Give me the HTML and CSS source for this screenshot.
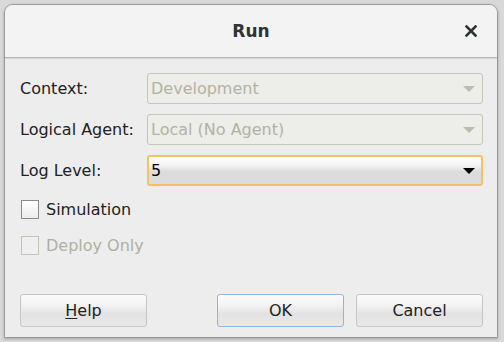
FILE: index.html
```html
<!DOCTYPE html>
<html lang="en">
<head>
    <meta charset="UTF-8">
    <title>Run</title>
    <link rel="stylesheet" href="styles.css">
</head>
<body>
    <div class="desktop">
        <div class="dialog">
            <header class="dialog-header">
                <h1 class="dialog-title">Run</h1>
                <button class="close-btn" aria-label="Close">
                    <svg width="12" height="12" viewBox="0 0 12 12">
                        <path d="M1.5 1.5 L10.5 10.5 M10.5 1.5 L1.5 10.5" stroke="#2e3436" stroke-width="2.6" stroke-linecap="square"/>
                    </svg>
                </button>
            </header>

            <div class="dialog-body">
                <div class="form-row">
                    <label class="field-label">Context:</label>
                    <div class="combo disabled">
                        <span class="combo-value">Development</span>
                        <span class="combo-arrow"></span>
                    </div>
                </div>
                <div class="form-row">
                    <label class="field-label">Logical Agent:</label>
                    <div class="combo disabled">
                        <span class="combo-value">Local (No Agent)</span>
                        <span class="combo-arrow"></span>
                    </div>
                </div>
                <div class="form-row">
                    <label class="field-label">Log Level:</label>
                    <div class="combo focused">
                        <span class="combo-value">5</span>
                        <span class="combo-arrow"></span>
                    </div>
                </div>

                <div class="checks">
                    <div class="check-row">
                        <span class="checkbox"></span>
                        <span class="check-label">Simulation</span>
                    </div>
                    <div class="check-row disabled">
                        <span class="checkbox"></span>
                        <span class="check-label">Deploy Only</span>
                    </div>
                </div>

                <div class="button-row">
                    <button class="btn"><u>H</u>elp</button>
                    <div class="button-group">
                        <button class="btn default">OK</button>
                        <button class="btn">Cancel</button>
                    </div>
                </div>
            </div>
        </div>
    </div>
</body>
</html>
```

FILE: styles.css
```css
* {
    margin: 0;
    padding: 0;
    box-sizing: border-box;
    font-family: "DejaVu Sans", sans-serif;
}

body {
    background: #d6d6d6;
    color: #222;
}

.desktop {
    width: 504px;
    height: 342px;
    padding: 4px 6px 4px 4px;
    background: #d9d9d9;
}

.dialog {
    width: 494px;
    height: 334px;
    background: #ededed;
    border: 1px solid #9a9a9a;
    border-radius: 9px 9px 0 0;
    box-shadow: 0 1px 3px rgba(0, 0, 0, 0.25);
    display: flex;
    flex-direction: column;
    overflow: hidden;
}

.dialog-header {
    height: 53px;
    background: #f3f3f3;
    border-bottom: 1px solid #b4b4b4;
    box-shadow: 0 1px 1px rgba(0, 0, 0, 0.08);
    display: flex;
    align-items: center;
    justify-content: center;
    position: relative;
}

.dialog-title {
    font-size: 17px;
    font-weight: bold;
    color: #2e3436;
}

.close-btn {
    position: absolute;
    right: 20px;
    top: 20px;
    border: none;
    background: none;
    width: 12px;
    height: 12px;
    display: flex;
}

.dialog-body {
    flex: 1;
    padding: 15px 14px 10px 15px;
    display: flex;
    flex-direction: column;
}

.form-row {
    display: flex;
    align-items: center;
    height: 31px;
    margin-bottom: 10px;
}

.field-label {
    width: 127px;
    font-size: 16px;
    color: #222;
}

.combo {
    flex: 1;
    height: 31px;
    border: 1px solid #c6c6b4;
    border-radius: 3px;
    display: flex;
    align-items: center;
    justify-content: space-between;
    padding: 0 7px 0 3px;
    font-size: 16px;
}

.combo.disabled {
    background: #ededea;
    color: #b3b3a3;
}

.combo.focused {
    border: 2px solid #f2c266;
    background: linear-gradient(#ffffff 0%, #f4f4f4 30%, #dcdcdc 55%, #dcdcdc 100%);
    color: #000;
    padding: 0 6px 0 2px;
}

.combo-arrow {
    width: 0;
    height: 0;
    border-left: 6px solid transparent;
    border-right: 6px solid transparent;
    border-top: 6px solid #bdbdad;
}

.combo.focused .combo-arrow {
    border-top-color: #000;
}

.checks {
    margin-top: 4px;
    display: flex;
    flex-direction: column;
    gap: 17px;
}

.check-row {
    display: flex;
    align-items: center;
    gap: 7px;
    height: 19px;
    margin-left: 1px;
    font-size: 16px;
}

.checkbox {
    width: 18px;
    height: 19px;
    border: 1px solid #8a8a8a;
    background: linear-gradient(#ffffff, #ececec);
}

.check-row.disabled .checkbox {
    border-color: #c4c4b6;
    background: #efefef;
}

.check-row.disabled .check-label {
    color: #b0b0a0;
}

.button-row {
    margin-top: auto;
    display: flex;
    justify-content: space-between;
    align-items: center;
}

.button-group {
    display: flex;
    gap: 12px;
}

.btn {
    width: 127px;
    height: 33px;
    border: 1px solid #c6c6c6;
    border-radius: 3px;
    background: linear-gradient(#fbfbfb 0%, #f2f2f2 35%, #e2e2e2 60%, #e8e8e8 100%);
    font-size: 16px;
    color: #222;
}

.btn.default {
    border-color: #8fb6e2;
}

.btn u {
    text-decoration-thickness: 1px;
    text-underline-offset: 2px;
}
```
